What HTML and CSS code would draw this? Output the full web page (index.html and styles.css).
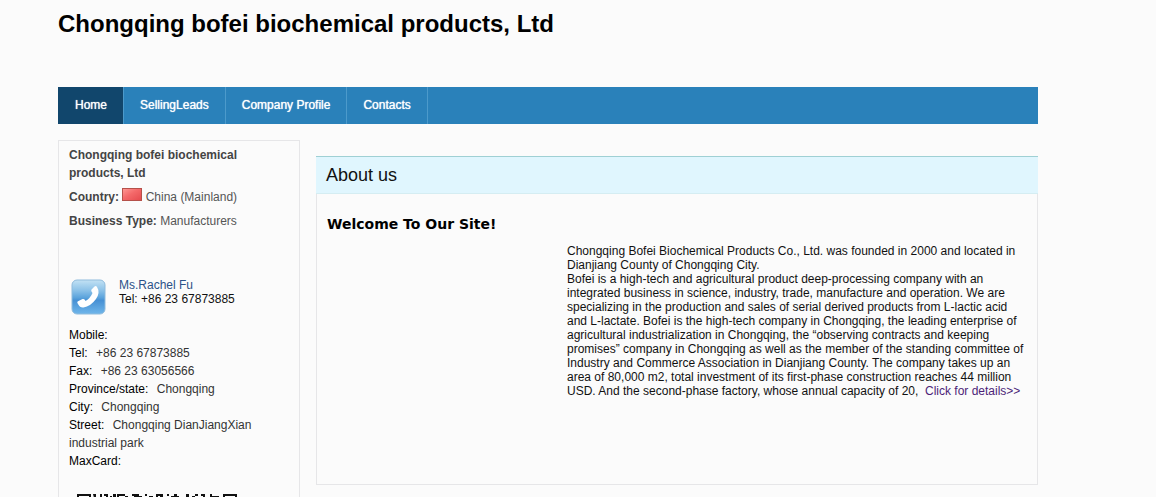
FILE: index.html
```html
<!DOCTYPE html>
<html lang="en">
<head>
<meta charset="utf-8">
<title>Chongqing bofei biochemical products, Ltd</title>
<link rel="stylesheet" href="styles.css">
</head>
<body>
<div class="page">
  <h1 class="site-title">Chongqing bofei biochemical products, Ltd</h1>
  <nav class="nav">
    <a class="nav-link active" href="#">Home</a>
    <a class="nav-link" href="#">SellingLeads</a>
    <a class="nav-link" href="#">Company Profile</a>
    <a class="nav-link" href="#">Contacts</a>
  </nav>
  <div class="columns">
    <aside class="sidebar">
      <div class="company">
        <p class="company-name"><b>Chongqing bofei biochemical products, Ltd</b></p>
        <p class="fact"><b>Country:</b>
          <svg class="flag" viewBox="0 0 20 13" role="img" aria-label="China flag">
            <defs><linearGradient id="red" x1="0" y1="0" x2="1" y2="1"><stop offset="0" stop-color="#ff9a96"/><stop offset=".45" stop-color="#f4696a"/><stop offset="1" stop-color="#e5494d"/></linearGradient></defs>
            <rect x=".5" y=".5" width="19" height="12" fill="url(#red)" stroke="#b5514a"/>
          </svg>
          <span>China (Mainland)</span></p>
        <p class="fact"><b>Business Type:</b> <span>Manufacturers</span></p>
      </div>
      <div class="contact">
        <svg class="phone" viewBox="0 0 36 36" aria-hidden="true">
          <defs><linearGradient id="blue" x1="0" y1="0" x2="0" y2="1"><stop offset="0" stop-color="#c3e2f4"/><stop offset=".3" stop-color="#8cc2e8"/><stop offset=".52" stop-color="#5ba3dc"/><stop offset=".6" stop-color="#4690d4"/><stop offset="1" stop-color="#6fb6ea"/></linearGradient></defs>
          <rect x="1" y="1" width="33" height="34" rx="5" fill="url(#blue)" stroke="#8fbbdc"/>
          <path d="M7 25C6 23.500 6 22.500 7.500 22L11.500 20Q13 19.500 14 21L14.500 22Q19.500 19 21.500 14L20.500 12.500Q20 11.500 20.500 10.500L23.500 7.500Q25 6.500 26 8Q29.500 13.500 25 20Q19.500 27.500 12.500 28.500Q9 29 7 25Z" fill="#fff"/>
        </svg>
        <div><a class="person" href="#">Ms.Rachel Fu</a><br>Tel: +86 23 67873885</div>
      </div>
      <ul class="details">
        <li>Mobile:</li>
        <li>Tel: <span>+86 23 67873885</span></li>
        <li>Fax: <span>+86 23 63056566</span></li>
        <li>Province/state: <span>Chongqing</span></li>
        <li>City: <span>Chongqing</span></li>
        <li>Street: <span>Chongqing DianJiangXian industrial park</span></li>
        <li>MaxCard:</li>
      </ul>
      <svg class="card-code" viewBox="1 0 180 180" role="img" aria-label="MaxCard code">
        <path fill="#111" d="M9 10h14v2h-12v12h-2zM21 12h2v12h-2zM25 10h3v2h2v2h2v-4h2v4h-4v-2h-2v2h-2zM36 10h4v4h-2v-2h-2zM42 12h2v2h-2zM45 10h3v4h-3zM49 10h8v2h-6v2h-2zM57 12h3v2h-3zM64 10h7v2h3v2h-8v-2h-2zM77 10h2v2h-2zM81 12h4v2h-4zM88 10h7v4h-3v-2h-2v2h-2zM99 10h2v2h-2zM103 12h8v2h-8zM106 10h3v2h-3zM118 10h3v4h-3zM124 12h3v2h-3zM127 10h3v2h-3zM133 10h4v4h-2v-2h-2zM142 10h2v2h7v2h-9zM155 10h14v14h-2v-12h-10v12h-2z"/>
      </svg>
    </aside>
    <main class="about">
      <h2 class="about-title">About us</h2>
      <div class="about-body">
        <h3 class="welcome">Welcome To Our Site!</h3>
        <p class="intro">Chongqing Bofei Biochemical Products Co., Ltd. was founded in 2000 and located in Dianjiang County of Chongqing City.<br>Bofei is a high-tech and agricultural product deep-processing company with an integrated business in science, industry, trade, manufacture and operation. We are specializing in the production and sales of serial derived products from L-lactic acid and L-lactate. Bofei is the high-tech company in Chongqing, the leading enterprise of agricultural industrialization in Chongqing, the “observing contracts and keeping promises” company in Chongqing as well as the member of the standing committee of Industry and Commerce Association in Dianjiang County. The company takes up an area of 80,000 m2, total investment of its first-phase construction reaches 44 million USD. And the second-phase factory, whose annual capacity of 20,&nbsp; <a class="more" href="#">Click for details&gt;&gt;</a></p>
      </div>
    </main>
  </div>
</div>
</body>
</html>
```
FILE: styles.css
```css
* { box-sizing: border-box; }
body {
  margin: 0;
  height: 100vh;
  overflow: hidden;
  background: #fbfbfb;
  color: #111;
  font: 12px/14px "Liberation Sans", Arial, sans-serif;
}
h1, h2, h3, p, ul { margin: 0; padding: 0; }
a { text-decoration: none; }
.page { max-width: 1038px; padding-left: 58px; }
.site-title {
  padding: 8px 0 47px;
  font-size: 24px;
  line-height: 32px;
  color: #000;
}
.nav {
  display: flex;
  height: 37px;
  border-left: 1px solid #11466c;
  background: #2a81ba;
}
.nav-link {
  padding: 0 16px;
  border-right: 1px solid #4c9acb;
  color: #fff;
  line-height: 36px;
  text-shadow: 0 0 1px #fff;
}
.nav-link.active { background: #11466c; }
.columns { display: flex; align-items: flex-start; gap: 16px; padding-top: 16px; }
.sidebar {
  flex: 0 0 242px;
  padding: 5px 10px;
  border: 1px solid #e6e6e8;
}
.company { color: #555; line-height: 18px; }
.company b { color: #444; }
.company-name { width: 200px; }
.fact { margin-top: 6px; }
.flag { width: 20px; height: 13px; }
.contact { display: flex; gap: 12px; padding-top: 48px; }
.phone { width: 36px; height: 38px; margin-left: 2px; }
.person { color: #2b5288; }
.details { padding-top: 10px; line-height: 18px; list-style: none; color: #000; }
.details span { margin-left: 5px; color: #333; }
.card-code { display: block; width: 180px; height: 180px; margin-top: 14px; }
.about { flex: 1; margin-top: 16px; }
.about-title {
  padding: 0 10px;
  border-top: 1px solid #9fd0d4;
  border-bottom: 1px solid #d5edf2;
  background: #e0f6fe;
  font-size: 18px;
  font-weight: normal;
  line-height: 36px;
}
.about-body {
  min-height: 291px;
  padding: 20px 10px;
  border: 1px solid #e6e6e8;
  border-top: 0;
}
.welcome { font: bold 14px/20px "DejaVu Sans", Verdana, sans-serif; color: #000; }
.intro { padding: 10px 0 0 240px; }
.more { color: #4d1f78; }
```
